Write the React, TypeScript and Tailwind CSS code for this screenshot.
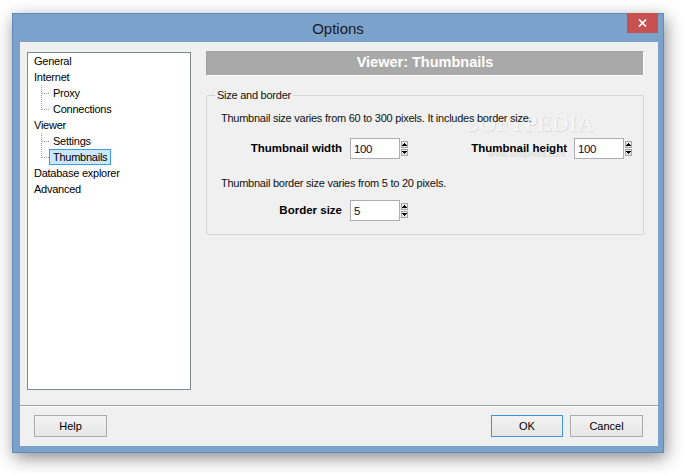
import React from "react";

const font = "font-['Liberation_Sans',Arial,sans-serif]";

type Node = { label: string; children?: string[] };

const tree: Node[] = [
  { label: "General" },
  { label: "Internet", children: ["Proxy", "Connections"] },
  { label: "Viewer", children: ["Settings", "Thumbnails"] },
  { label: "Database explorer" },
  { label: "Advanced" },
];

const selected = "Thumbnails";

function Connector({ last }: { last: boolean }) {
  return (
    <svg width="15" height="16" className="shrink-0" shapeRendering="crispEdges">
      <line x1="7.5" y1="0" x2="7.5" y2={last ? 9 : 16} stroke="#a0a0a0" strokeDasharray="1 1" />
      <line x1="8" y1="8.5" x2="15" y2="8.5" stroke="#a0a0a0" strokeDasharray="1 1" />
    </svg>
  );
}

function TreeView() {
  return (
    <div className="mt-[1px] ml-[7px] w-[164px] h-[338px] shrink-0 bg-white border border-[#828790] pl-[6px] text-[11px] tracking-[-0.25px] text-black">
      {tree.map((n) => (
        <div key={n.label}>
          <div className="h-[16px] flex items-center leading-[14px]">{n.label}</div>
          {n.children?.map((c, i) => {
            const sel = c === selected;
            return (
              <div key={c} className="h-[16px] flex items-start">
                <Connector last={i === n.children!.length - 1} />
                <div
                  className={
                    "h-[16px] px-[3px] border flex items-center leading-[14px] " +
                    (sel ? "bg-[#cce8ff] border-[#3e9de0]" : "border-transparent")
                  }
                >
                  {c}
                </div>
              </div>
            );
          })}
        </div>
      ))}
    </div>
  );
}

function Spinner() {
  return (
    <div className="ml-[1px] w-[7px] flex flex-col gap-[1px]">
      <div className="h-[7px] bg-[#e8e8e8] border border-[#a8a8a8] flex items-center justify-center">
        <svg width="5" height="3" viewBox="0 0 5 3" shapeRendering="crispEdges">
          <path d="M2 0h1v1h1v1h1v1H0V2h1V1h1z" fill="#000" />
        </svg>
      </div>
      <div className="h-[7px] bg-[#e8e8e8] border border-[#a8a8a8] flex items-center justify-center">
        <svg width="5" height="3" viewBox="0 0 5 3" shapeRendering="crispEdges">
          <path d="M0 0h5v1H4v1H3v1H2V2H1V1H0z" fill="#000" />
        </svg>
      </div>
    </div>
  );
}

function NumberBox({ value }: { value: string }) {
  return (
    <div className="flex items-center">
      <div className="w-[50px] h-[21px] bg-white border border-[#abadb3] pl-[3px] flex items-center text-[11.5px] tracking-[-0.4px] text-[#10082a] leading-[14px]">
        {value}
      </div>
      <Spinner />
    </div>
  );
}

function Button({ label, primary }: { label: string; primary?: boolean }) {
  return (
    <div
      className={
        "h-[22px] flex items-center justify-center text-[11px] text-black bg-gradient-to-b from-[#f3f3f3] to-[#e6e6e6] border " +
        (primary ? "w-[72px] border-[#3c94e6]" : "w-[73px] border-[#acacac]")
      }
    >
      {label}
    </div>
  );
}

export default function App() {
  return (
    <div className={"w-[685px] h-[474px] bg-white pl-[12px] pt-[13px] overflow-hidden " + font}>
      <div className="w-[652px] h-[440px] bg-[#7ba2cb] border border-[#6489b3] shadow-[2px_5px_16px_rgba(0,0,0,0.45)] flex flex-col">
        {/* title bar */}
        <div className="relative h-[28px] flex items-center justify-center">
          <span className="text-[15px] text-[#1b1b1b] leading-[18px] mt-[1px]">Options</span>
          <div className="absolute -top-[1px] right-[5px] w-[31px] h-[20px] bg-[#c75050] flex items-center justify-center">
            <svg width="9" height="8" viewBox="0 0 9 8">
              <path d="M1 0.5L8 7.5M8 0.5L1 7.5" stroke="#fff" strokeWidth="1.7" />
            </svg>
          </div>
        </div>

        {/* client area */}
        <div className="ml-[7px] mr-[5px] h-[404px] bg-[#f0f0f0] flex flex-col">
          <div className="h-[363px] pt-[9px] flex">
            <TreeView />

            <div className="ml-[15px] w-[438px] relative">
              {/* watermark, sits behind the form */}
              <div className="absolute left-[260px] top-[61px] z-0 pointer-events-none select-none">
                <div className="font-['Liberation_Serif',serif] text-[23px] tracking-[0.5px] text-[#f6f6f6] leading-[24px] [text-shadow:1px_1px_0_#dcdcdc]">
                  SOFTPEDIA
                </div>
                <div className="ml-[22px] mt-[13px] text-[9px] text-[#d8d8d8] leading-[10px]">www.softpedia.com</div>
              </div>

              <div className="relative z-10 h-[25px] bg-[#a9a9a9] border border-[#a2a2a2] border-r-white border-b-white flex items-center justify-center">
                <span className="text-white font-bold text-[14.5px] leading-[16px] -mt-[3px]">Viewer: Thumbnails</span>
              </div>

              <fieldset className="relative z-10 mt-[13px] w-[438px] border border-[#d5d5d5] rounded-[2px] pt-[9px] pb-[13px] text-[11px] tracking-[-0.25px] text-[#111]">
                <legend className="ml-[8px] px-[2px] leading-[13px] text-[#111]">Size and border</legend>
                <div className="pl-[14px] leading-[14px]">
                  Thumbnail size varies from 60 to 300 pixels. It includes border size.
                </div>
                <div className="mt-[13px] pl-[14px] h-[21px] flex items-center">
                  <div className="w-[121px] text-right font-bold text-[11.5px] tracking-normal text-black">Thumbnail width</div>
                  <div className="ml-[8px]">
                    <NumberBox value="100" />
                  </div>
                  <div className="w-[159px] text-right font-bold text-[11.5px] tracking-normal text-black">Thumbnail height</div>
                  <div className="ml-[7px]">
                    <NumberBox value="100" />
                  </div>
                </div>
                <div className="mt-[17px] pl-[14px] leading-[14px]">
                  Thumbnail border size varies from 5 to 20 pixels.
                </div>
                <div className="mt-[10px] pl-[14px] h-[21px] flex items-center">
                  <div className="w-[121px] text-right font-bold text-[11.5px] tracking-normal text-black">Border size</div>
                  <div className="ml-[8px]">
                    <NumberBox value="5" />
                  </div>
                </div>
              </fieldset>
            </div>
          </div>

          <div className="h-[1px] bg-[#a0a0a0]" />
          <div className="h-[1px] bg-white" />

          <div className="mt-[8px] pl-[14px] pr-[15px] flex items-center">
            <Button label="Help" />
            <div className="flex-1" />
            <Button label="OK" primary />
            <div className="ml-[7px]">
              <Button label="Cancel" />
            </div>
          </div>
        </div>
      </div>
    </div>
  );
}
